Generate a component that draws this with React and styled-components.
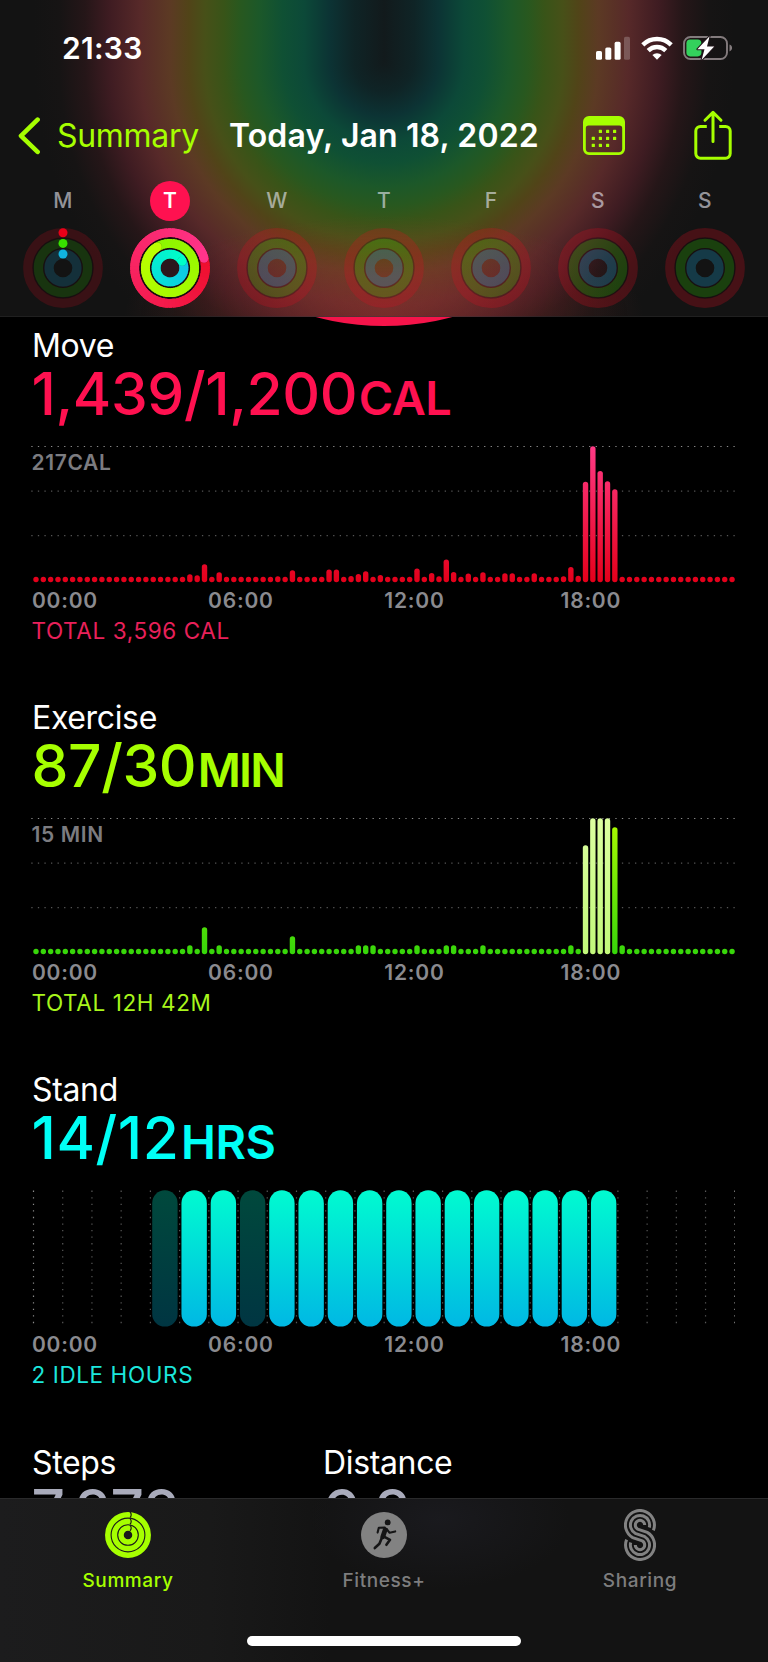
import React from 'react';
import styled, { createGlobalStyle, css } from 'styled-components';

const GlobalStyle = createGlobalStyle`
  * {
    box-sizing: border-box;
  }

  body {
    margin: 0;
    background: #000;
    font-family: Inter, 'Liberation Sans', sans-serif;
    -webkit-font-smoothing: antialiased;
  }
`;

const LIME = '#a6ff00';

const glowStops = `
  #121a1c 0px, #0f2426 30px, #0c3334 54px, #0c4938 80px, #0f5034 101px,
  #1c5829 125px, #28581f 144px, #385418 160px, #475018 179px, #514418 195px,
  #5c3a24 214px, #572929 244px, #3f1c22 274px, #251618 299px, #161414 325px, #131313 350px
`;

const Screen = styled.div`
  width: 768px;
  height: 1662px;
  display: flex;
  flex-direction: column;
  overflow: hidden;
  background: #000;
  color: #fff;
`;

const Header = styled.header`
  height: 317px;
  flex: none;
  border-bottom: 1px solid rgba(255, 255, 255, 0.06);
  background:
    radial-gradient(ellipse 260px 100px at 50% 100%, rgba(185, 58, 48, 0.36), rgba(185, 58, 48, 0.16) 60%, transparent),
    linear-gradient(to right, ${glowStops}) 384px 0 / 384px 62px no-repeat,
    linear-gradient(to left, ${glowStops}) 0 0 / 384px 62px no-repeat,
    radial-gradient(circle at 384px 0, ${glowStops}) 0 62px / 768px 256px no-repeat;
`;

const StatusBar = styled.div`
  height: 96px;
  padding: 0 35px 0 62px;
  display: flex;
  align-items: center;
  justify-content: space-between;
`;

const Clock = styled.span`
  font-size: 30px;
  font-weight: 600;
  line-height: 38px;
  letter-spacing: 0.3px;
`;

const StatusIcons = styled.div`
  display: flex;
  align-items: center;
  gap: 10.5px;
`;

const NavBar = styled.nav`
  height: 80px;
  padding: 0 36px 0 18px;
  display: flex;
  align-items: center;
`;

const BackButton = styled.a`
  width: 211px;
  display: flex;
  align-items: center;
  gap: 16px;
  color: ${LIME};
  font-size: 32px;
  line-height: 40px;
  letter-spacing: -0.3px;
`;

const NavTitle = styled.h1`
  width: 353.5px;
  margin: 0;
  font-size: 32px;
  font-weight: 600;
  line-height: 40px;
  letter-spacing: 0.12px;
  white-space: nowrap;
`;

const NavActions = styled.div`
  flex: 1;
  display: flex;
  align-items: center;
  justify-content: space-between;
`;

const Week = styled.div`
  display: grid;
  grid-template-columns: repeat(7, 107px);
  padding: 4.6px 0 0 9.4px;
`;

const Day = styled.div`
  display: flex;
  flex-direction: column;
  align-items: center;
  gap: 7px;
`;

const DayLetter = styled.span`
  width: 40px;
  height: 40px;
  border-radius: 50%;
  font-size: 21px;
  font-weight: 500;
  line-height: 40px;
  text-align: center;
  color: rgba(235, 235, 245, 0.6);

  ${({ $active }) => $active && css`
    background: #ff1150;
    color: #fff;
    font-weight: 600;
  `}
`;

const Content = styled.main`
  position: relative;
  flex: 1;
  min-height: 0;
  overflow: hidden;
  padding: 10px 33px 0 31px;
`;

/* Bottom edge of the big activity ring, scrolled under the header */
const RingEdge = styled.div`
  position: absolute;
  left: 120px;
  bottom: 100%;
  width: 528px;
  height: 528px;
  margin-bottom: -9.4px;
  border-radius: 50%;
  background: #f5144a;
`;

const Section = styled.section`
  height: 372.2px;
`;

const SectionTitle = styled.h2`
  margin: 0;
  padding-left: 1px;
  font-size: 32px;
  font-weight: 400;
  line-height: 38px;
  letter-spacing: -0.35px;
`;

const Value = styled.div`
  color: ${({ $color }) => $color};
  padding-left: 0.5px;
  font-size: 58.7px;
  font-weight: 500;
  line-height: 57px;
  letter-spacing: ${({ $spacing }) => $spacing || '-0.4px'};
  white-space: nowrap;
`;

const Unit = styled.span`
  margin-left: 1.5px;
  font-size: 46.8px;
  font-weight: 600;
  line-height: 1;
  letter-spacing: ${({ $spacing }) => $spacing || '-0.5px'};
`;

const Chart = styled.div`
  position: relative;
  height: 137px;
  margin-top: 24px;

  svg {
    display: block;
  }
`;

const ScaleLabel = styled.span`
  position: absolute;
  top: 3.5px;
  left: 0.5px;
  font-size: 21px;
  font-weight: 600;
  line-height: 26px;
  letter-spacing: 0.65px;
  color: #7c7c80;
`;

const Axis = styled.div`
  display: grid;
  grid-template-columns: repeat(4, 176.2px);
  margin-top: 4.5px;
  padding-left: 0.9px;
  font-size: 21px;
  font-weight: 600;
  line-height: 26px;
  letter-spacing: 0.8px;
  color: #8a8a8f;
`;

const Total = styled.div`
  margin-top: 3.5px;
  padding-left: 0.5px;
  font-size: 22.5px;
  line-height: 28px;
  letter-spacing: 0.6px;
  color: ${({ $color }) => $color};
`;

const Stats = styled.div`
  display: grid;
  grid-template-columns: 291px 1fr;
`;

const TabBar = styled.footer`
  height: 164px;
  flex: none;
  display: flex;
  flex-direction: column;
  align-items: center;
  justify-content: space-between;
  padding-bottom: 16px;
  border-top: 1px solid #2a2a2b;
  background:
    radial-gradient(ellipse 130px 70px at 440px 20px, rgba(36, 36, 46, 0.4), transparent),
    linear-gradient(to right, #1c1c1d 0, #191919 210px, #131313 330px, #131313);
`;

const Tabs = styled.div`
  width: 100%;
  display: grid;
  grid-template-columns: repeat(3, 1fr);
`;

const Tab = styled.a`
  display: flex;
  flex-direction: column;
  align-items: center;
  padding-top: 10px;
  font-size: 19px;
  font-weight: 500;
  line-height: 24px;
  letter-spacing: 0.6px;
  color: ${({ $active }) => ($active ? LIME : '#7d7d7e')};
`;

const TabIcon = styled.span`
  height: 52px;
  margin-bottom: 8px;
  display: flex;
  align-items: center;
`;

const HomeIndicator = styled.div`
  width: 274px;
  height: 10px;
  border-radius: 5px;
  background: #fff;
`;

function SignalIcon() {
  return (
    <svg width="34" height="24" viewBox="0 0 34 24">
      <rect x="0" y="15" width="6" height="8.8" rx="1.6" fill="#fff" />
      <rect x="9.3" y="11.4" width="6" height="12.4" rx="1.6" fill="#fff" />
      <rect x="18.6" y="5.8" width="6" height="18" rx="1.6" fill="#fff" />
      <rect x="28" y="0.8" width="6" height="23" rx="1.6" fill="#fff" opacity="0.22" />
    </svg>
  );
}

function WifiIcon() {
  return (
    <svg width="32" height="24" viewBox="0 0 32 24" fill="none" stroke="#fff" strokeWidth="4.4">
      <path d="M1.8 8.9a20.2 20.2 0 0 1 28.4 0" />
      <path d="M7.2 14.6a12.5 12.5 0 0 1 17.6 0" />
      <path d="M16 23.8l4.6-4.8a6.6 6.6 0 0 0-9.2 0z" fill="#fff" stroke="none" />
    </svg>
  );
}

function BatteryIcon() {
  return (
    <svg width="50" height="26" viewBox="0 0 50 26">
      <rect x="1" y="2" width="43" height="22" rx="6.5" fill="none" stroke="#837b7d" strokeWidth="1.9" />
      <path d="M46.5 9.6v6.8c1.6-.5 2.6-1.9 2.6-3.4s-1-2.9-2.6-3.4z" fill="#837b7d" />
      <rect x="3.4" y="4.6" width="15" height="16.8" rx="3.8" fill="#33d15c" />
      <path
        d="M26.6 1.2L14.4 14.2h7.1L18.6 25l12.6-13.4h-7.2z"
        fill="#fff"
        stroke="#21161a"
        strokeWidth="2"
        paintOrder="stroke"
        strokeLinejoin="round"
      />
    </svg>
  );
}

function BackIcon() {
  return (
    <svg width="23" height="40" viewBox="0 0 23 40" fill="none" stroke={LIME} strokeWidth="4.6" strokeLinecap="round" strokeLinejoin="round">
      <path d="M19.6 3.7L3 19.8 19.6 35.9" />
    </svg>
  );
}

function CalendarIcon() {
  const dots = [[17.4, 15.4], [24.6, 15.4], [31.6, 15.4], [10.3, 22.4], [17.4, 22.4], [24.6, 22.4], [31.6, 22.4], [10.3, 29.4], [17.4, 29.4], [24.6, 29.4]];
  return (
    <svg width="42" height="40" viewBox="0 0 42 40">
      <path
        fill={LIME}
        fillRule="evenodd"
        d="M6 0h30a6 6 0 0 1 6 6v27a6 6 0 0 1-6 6H6a6 6 0 0 1-6-6V6a6 6 0 0 1 6-6zM5.6 9.6A2.8 2.8 0 0 0 2.8 12.4v20.4A3.4 3.4 0 0 0 6.2 36.2h29.6a3.4 3.4 0 0 0 3.4-3.4V12.4a2.8 2.8 0 0 0-2.8-2.8z"
      />
      {dots.map(([x, y]) => (
        <rect key={`${x}-${y}`} x={x - 1.6} y={y - 1.6} width="3.2" height="3.2" rx="0.6" fill={LIME} />
      ))}
    </svg>
  );
}

function ShareIcon() {
  return (
    <svg width="38" height="52" viewBox="0 0 38 52" fill="none" stroke={LIME} strokeWidth="3" strokeLinecap="round" strokeLinejoin="round">
      <path strokeLinecap="butt" d="M12.8 16.4H6.4a4.6 4.6 0 0 0-4.6 4.6v22.6a4.6 4.6 0 0 0 4.6 4.6h25.2a4.6 4.6 0 0 0 4.6-4.6V21a4.6 4.6 0 0 0-4.6-4.6h-6.4" />
      <path d="M19 31.4V3M11 10.2L19 2.4l8 7.8" />
    </svg>
  );
}

function mix(a, b, t) {
  return `rgb(${a.map((v, i) => Math.round(v + (b[i] - v) * t)).join(',')})`;
}

const todayRings = [
  { r: 35.4, end: 74, from: [238, 14, 44], to: [255, 52, 138] },
  { r: 24.6, end: 329, from: [140, 246, 0], to: [188, 255, 0] },
  { r: 13.9, end: 61, from: [16, 196, 232], to: [0, 255, 200] },
];

const pointOn = (r, deg) => {
  const a = ((deg - 90) * Math.PI) / 180;
  return `${(40 + r * Math.cos(a)).toFixed(2)} ${(40 + r * Math.sin(a)).toFixed(2)}`;
};

/* Every goal is exceeded, so each ring is a full turn that ends on a round cap */
function TodayRings() {
  return (
    <svg width="80" height="80" viewBox="0 0 80 80" fill="none">
      <circle cx="40" cy="40" r="37" fill="#1a0c10" />
      <circle cx="40" cy="40" r="9.4" fill="#2b171c" />
      {todayRings.map(({ r, end, from, to }) => {
        const [cx, cy] = pointOn(r, end).split(' ');
        return (
          <g key={r} strokeWidth="8.9">
            {Array.from({ length: 60 }, (_, i) => (
              <path
                key={i}
                d={`M${pointOn(r, end + i * 6 - 5)}A${r} ${r} 0 0 1 ${pointOn(r, end + i * 6 + 6)}`}
                stroke={mix(from, to, i / 59)}
              />
            ))}
            <circle cx={cx} cy={cy} r="4.8" fill="rgba(0,0,0,0.22)" />
            <path d={`M${pointOn(r, end - 18)}A${r} ${r} 0 0 1 ${pointOn(r, end)}`} stroke={mix(from, to, 1)} />
            <circle cx={cx} cy={cy} r="4.45" fill={mix(from, to, 1)} />
          </g>
        );
      })}
    </svg>
  );
}

function EmptyRings({ started }) {
  const dim = started ? 0.75 : 1;
  return (
    <svg width="80" height="80" viewBox="0 0 80 80" fill="none">
      <g strokeWidth="9.4" opacity={dim}>
        <circle cx="40" cy="40" r="35.2" stroke="rgba(225,12,30,0.25)" />
        <circle cx="40" cy="40" r="24.6" stroke="rgba(50,210,0,0.24)" />
        <circle cx="40" cy="40" r="14" stroke="rgba(30,160,210,0.28)" />
      </g>
      <g stroke="rgba(40,0,10,0.22)" strokeWidth="1.5">
        <circle cx="40" cy="40" r="29.9" />
        <circle cx="40" cy="40" r="19.3" />
      </g>
      {started && (
        <g>
          <circle cx="40" cy="4.7" r="4.5" fill="#e80018" />
          <circle cx="40" cy="15.4" r="4.5" fill="#38e000" />
          <circle cx="40" cy="26" r="4.5" fill="#10b4e0" />
        </g>
      )}
    </svg>
  );
}

const slots = (values, min) => Array.from({ length: 96 }, (_, i) => values[i] || min);

const moveBars = slots({
  21: 8, 22: 7, 23: 18, 25: 10, 33: 6, 35: 12, 40: 12.7, 41: 12.7, 43: 6.3, 44: 8.3, 45: 11, 47: 7.3,
  52: 13.7, 54: 9.3, 55: 6, 56: 22.7, 57: 10.3, 59: 8.7, 61: 10, 64: 9, 65: 9, 68: 9, 72: 6, 73: 15.3,
  74: 6.5, 75: 100.5, 76: 136, 77: 111.3, 78: 101, 79: 93,
}, 5.4);

const exerciseBars = slots({
  21: 9, 23: 27, 25: 9, 35: 18, 44: 9, 45: 9, 46: 9, 52: 9, 56: 9, 57: 9, 61: 9, 73: 9,
  75: 109, 76: 136, 77: 136, 78: 136, 79: 127, 80: 9,
}, 5.4);

function BarChart({ id, bars, top, bottom, isWorkout = () => false }) {
  return (
    <svg width="704" height="137" viewBox="0 0 704 137">
      <defs>
        <linearGradient id={id} gradientUnits="userSpaceOnUse" x1="0" y1="0" x2="0" y2="136">
          <stop offset="0" stopColor={top} />
          <stop offset="1" stopColor={bottom} />
        </linearGradient>
        <linearGradient id={`${id}-workout`} gradientUnits="userSpaceOnUse" x1="0" y1="0" x2="0" y2="136">
          <stop offset="0" stopColor="#dcffa0" />
          <stop offset="1" stopColor="#c2f87a" />
        </linearGradient>
      </defs>
      {[0.2, 44.8, 89.4].map((y, i) => (
        <line key={y} x1="0.3" x2="704" y1={y + 0.3} y2={y + 0.3} stroke={i === 0 ? '#8a8a8a' : '#555'} strokeWidth="1.2" strokeDasharray="1.3 5.262" />
      ))}
      {bars.map((h, i) => (
        <rect
          key={i}
          x={2.3 + i * 7.327}
          y={136.2 - h}
          width="5.4"
          height={h}
          rx="2.7"
          fill={`url(#${isWorkout(i) ? `${id}-workout` : id})`}
        />
      ))}
    </svg>
  );
}

function StandChart() {
  return (
    <svg width="704" height="138" viewBox="0 0 704 138">
      <defs>
        <linearGradient id="stand" x1="0" y1="0" x2="0" y2="1">
          <stop offset="0" stopColor="#00fbd0" />
          <stop offset="1" stopColor="#00b8e4" />
        </linearGradient>
      </defs>
      {Array.from({ length: 25 }, (_, i) => (
        <line
          key={i}
          x1={2.5 + i * 29.22}
          x2={2.5 + i * 29.22}
          y1="0.6"
          y2="134"
          stroke={i === 0 || i === 24 ? '#8a8a8a' : '#585858'}
          strokeWidth="1.2"
          strokeDasharray="1.3 5.262"
        />
      ))}
      {Array.from({ length: 16 }, (_, i) => i + 4).map((hour) => (
        <rect
          key={hour}
          x={4.2 + hour * 29.25}
          y="0.2"
          width="25.4"
          height="136.4"
          rx="12.7"
          fill="url(#stand)"
          opacity={hour === 4 || hour === 7 ? 0.29 : 1}
        />
      ))}
    </svg>
  );
}

function HourAxis() {
  return (
    <Axis>
      <span>00:00</span>
      <span>06:00</span>
      <span>12:00</span>
      <span>18:00</span>
    </Axis>
  );
}

function RingsTabIcon() {
  return (
    <svg width="46" height="46" viewBox="0 0 46 46" fill="none">
      <g stroke={LIME} strokeWidth="5.5">
        <circle cx="23" cy="23" r="20.2" />
        <circle cx="23" cy="23" r="13.6" />
        <circle cx="23" cy="23" r="7" />
      </g>
      <g stroke="#1a1c16" strokeWidth="1.2">
        <path d="M25 0c1.6 1.4 1.6 4.2 0 5.6" />
        <path d="M25 6.6c1.6 1.4 1.6 4.2 0 5.6" />
        <path d="M25 13.2c1.6 1.4 1.6 4.2 0 5.6" />
      </g>
    </svg>
  );
}

function FitnessTabIcon() {
  return (
    <svg width="46" height="46" viewBox="0 0 46 46" fill="none" stroke="#151516" strokeLinecap="round" strokeLinejoin="round">
      <circle cx="23" cy="23" r="23" fill="#828282" stroke="none" />
      <circle cx="26.7" cy="10.4" r="2.9" fill="#151516" stroke="none" />
      <path d="M16.6 20.6l1.2-4.8 6-.2" strokeWidth="2.1" />
      <path d="M24.2 17.8l-2.4 7" strokeWidth="4.8" />
      <path d="M25.6 17l3 3.8 5.6-1.4" strokeWidth="2.1" />
      <path d="M23 24.6l6 3.2-3.6 5" strokeWidth="2.6" />
      <path d="M20.8 26l-2.4 5.8-4.6 4.2" strokeWidth="2.6" />
    </svg>
  );
}

function SharingTabIcon() {
  return (
    <svg width="32" height="52" viewBox="0 0 32 52" fill="none" stroke="#828282" strokeWidth="3">
      <path d="M29.4 21.4A14.5 14.5 0 1 0 8.75 28.6L18.35 31.9A4.7 4.7 0 1 1 11.3 36" />
      <path d="M25.3 18.5A9.6 9.6 0 1 0 11.2 24.3L20.8 27.7A9.6 9.6 0 1 1 6.7 33.5" />
      <path d="M20.7 16A4.7 4.7 0 1 0 13.65 20.1L23.25 23.4A14.5 14.5 0 1 1 2.6 30.6" />
    </svg>
  );
}

const week = ['M', 'T', 'W', 'T', 'F', 'S', 'S'];

function App() {
  return (
    <Screen>
      <GlobalStyle />
      <Header>
        <StatusBar>
          <Clock>21:33</Clock>
          <StatusIcons>
            <SignalIcon />
            <WifiIcon />
            <BatteryIcon />
          </StatusIcons>
        </StatusBar>
        <NavBar>
          <BackButton>
            <BackIcon />
            Summary
          </BackButton>
          <NavTitle>Today, Jan 18, 2022</NavTitle>
          <NavActions>
            <CalendarIcon />
            <ShareIcon />
          </NavActions>
        </NavBar>
        <Week>
          {week.map((letter, i) => (
            <Day key={i}>
              <DayLetter $active={i === 1}>{letter}</DayLetter>
              {i === 1 ? <TodayRings /> : <EmptyRings started={i === 0} />}
            </Day>
          ))}
        </Week>
      </Header>

      <Content>
        <RingEdge />
        <Section>
          <SectionTitle>Move</SectionTitle>
          <Value $color="#ff1150">1,439/1,200<Unit>CAL</Unit></Value>
          <Chart>
            <BarChart id="move" bars={moveBars} top="#ff3a86" bottom="#e4001a" />
            <ScaleLabel>217CAL</ScaleLabel>
          </Chart>
          <HourAxis />
          <Total $color="#e8205a">TOTAL 3,596 CAL</Total>
        </Section>

        <Section>
          <SectionTitle>Exercise</SectionTitle>
          <Value $color={LIME}>87/30<Unit $spacing="-1.9px">MIN</Unit></Value>
          <Chart>
            <BarChart id="exercise" bars={exerciseBars} top="#acfb00" bottom="#36d60a" isWorkout={(i) => i >= 75 && i <= 78} />
            <ScaleLabel>15 MIN</ScaleLabel>
          </Chart>
          <HourAxis />
          <Total $color="#a8f51c">TOTAL 12H 42M</Total>
        </Section>

        <Section>
          <SectionTitle>Stand</SectionTitle>
          <Value $color="#00fff6" $spacing="0.6px">14/12<Unit>HRS</Unit></Value>
          <Chart>
            <StandChart />
          </Chart>
          <HourAxis />
          <Total $color="#1ce6dc">2 IDLE HOURS</Total>
        </Section>

        <Stats>
          <div>
            <SectionTitle>Steps</SectionTitle>
            <Value $color="#a9abbb">7,272</Value>
          </div>
          <div>
            <SectionTitle>Distance</SectionTitle>
            <Value $color="#a9abbb">6.2<Unit>KM</Unit></Value>
          </div>
        </Stats>
      </Content>

      <TabBar>
        <Tabs>
          <Tab $active>
            <TabIcon><RingsTabIcon /></TabIcon>
            Summary
          </Tab>
          <Tab>
            <TabIcon><FitnessTabIcon /></TabIcon>
            Fitness+
          </Tab>
          <Tab>
            <TabIcon><SharingTabIcon /></TabIcon>
            Sharing
          </Tab>
        </Tabs>
        <HomeIndicator />
      </TabBar>
    </Screen>
  );
}

export default App;
